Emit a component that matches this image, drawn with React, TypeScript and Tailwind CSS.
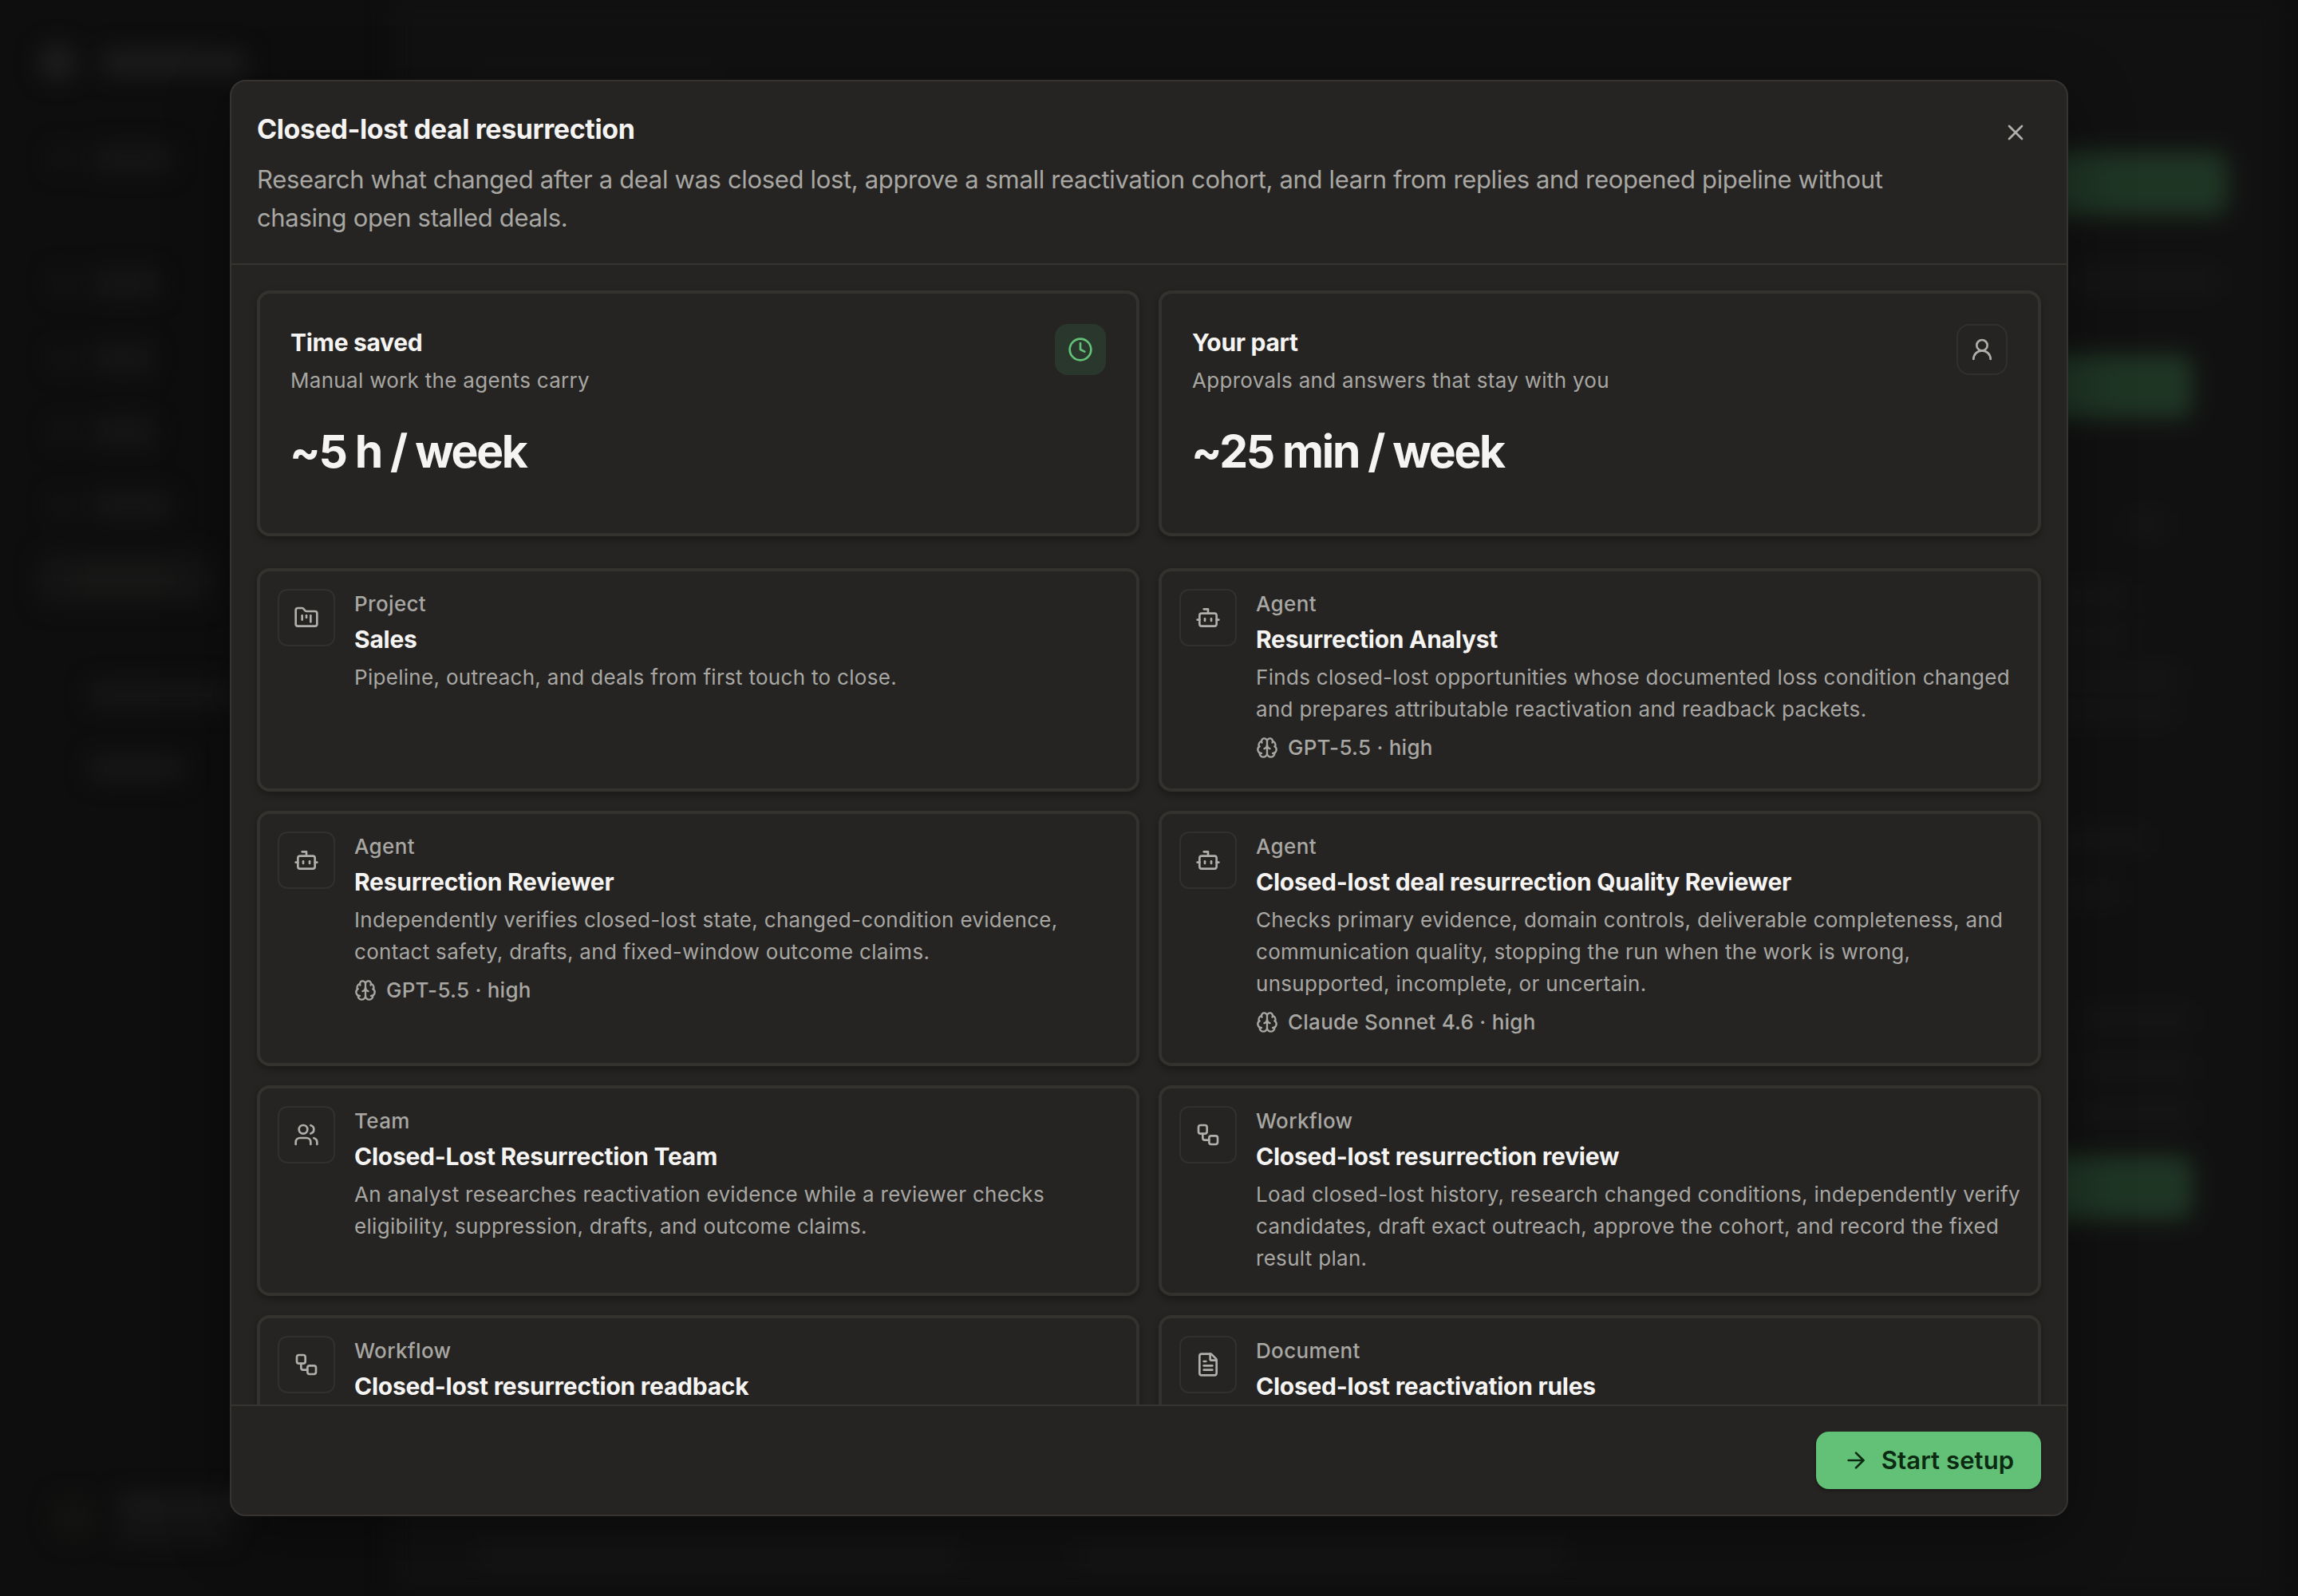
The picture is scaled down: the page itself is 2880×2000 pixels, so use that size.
import React from "react";
import {
  ArrowRight,
  Bot,
  Brain,
  Clock,
  FileText,
  FolderKanban,
  UserRound,
  Users,
  Workflow,
  X,
  type LucideIcon,
} from "lucide-react";

type Item = {
  icon: LucideIcon;
  kind: string;
  title: string;
  lines: string[];
  model?: string;
};

const items: Item[] = [
  {
    icon: FolderKanban,
    kind: "Project",
    title: "Sales",
    lines: ["Pipeline, outreach, and deals from first touch to close."],
  },
  {
    icon: Bot,
    kind: "Agent",
    title: "Resurrection Analyst",
    lines: [
      "Finds closed-lost opportunities whose documented loss condition changed",
      "and prepares attributable reactivation and readback packets.",
    ],
    model: "GPT-5.5 · high",
  },
  {
    icon: Bot,
    kind: "Agent",
    title: "Resurrection Reviewer",
    lines: [
      "Independently verifies closed-lost state, changed-condition evidence,",
      "contact safety, drafts, and fixed-window outcome claims.",
    ],
    model: "GPT-5.5 · high",
  },
  {
    icon: Bot,
    kind: "Agent",
    title: "Closed-lost deal resurrection Quality Reviewer",
    lines: [
      "Checks primary evidence, domain controls, deliverable completeness, and",
      "communication quality, stopping the run when the work is wrong,",
      "unsupported, incomplete, or uncertain.",
    ],
    model: "Claude Sonnet 4.6 · high",
  },
  {
    icon: Users,
    kind: "Team",
    title: "Closed-Lost Resurrection Team",
    lines: [
      "An analyst researches reactivation evidence while a reviewer checks",
      "eligibility, suppression, drafts, and outcome claims.",
    ],
  },
  {
    icon: Workflow,
    kind: "Workflow",
    title: "Closed-lost resurrection review",
    lines: [
      "Load closed-lost history, research changed conditions, independently verify",
      "candidates, draft exact outreach, approve the cohort, and record the fixed",
      "result plan.",
    ],
  },
  {
    icon: Workflow,
    kind: "Workflow",
    title: "Closed-lost resurrection readback",
    lines: [],
  },
  {
    icon: FileText,
    kind: "Document",
    title: "Closed-lost reactivation rules",
    lines: [],
  },
];

// Sidebar rows and the side column, seen only as blurred shapes
const navRows = [
  { gap: "mt-[80px]", width: "w-[100px]" },
  { gap: "mt-[122px]", width: "w-[83px]" },
  { gap: "mt-[60px]", width: "w-[75px]" },
  { gap: "mt-[58px]", width: "w-[77px]" },
  { gap: "mt-[58px]", width: "w-[100px]" },
];

const sideRows = [
  "mt-[118px] w-[50px] mr-[145px]",
  "mt-[60px] w-[140px] mr-[190px]",
  "mt-[20px] w-[140px] mr-[190px]",
  "mt-[22px] w-[200px] mr-[128px]",
  "mt-[14px] w-[190px] mr-[135px]",
  "mt-[130px] w-[160px] mr-[170px]",
  "mt-[36px] w-[120px] mr-[200px]",
  "mt-[128px] w-[140px] mr-[114px]",
  "mt-[30px] w-[140px] mr-[114px]",
  "mt-[28px] w-[140px] mr-[114px]",
];

const StatCard = ({
  title,
  subtitle,
  value,
  children,
}: {
  title: string;
  subtitle: string;
  value: string;
  children: React.ReactNode;
}) => (
  <div className="flex h-[308px] justify-between rounded-2xl border-4 border-[#33322f] p-[38px] shadow-[0_4px_10px_rgba(0,0,0,0.3)]">
    <div className="-mt-px whitespace-nowrap">
      <div className="text-[30px] leading-[48px] font-bold tracking-[-0.3px] text-[#f5f4f2]">
        {title}
      </div>
      <div className="text-[26px] leading-12 tracking-[0.3px] text-[#a8a7a3]">
        {subtitle}
      </div>
      <div className="mt-[25px] -ml-px text-[57px] leading-[80px] font-bold tracking-[-2.3px] text-[#f5f4f2]">
        {value}
      </div>
    </div>
    {children}
  </div>
);

const ItemCard = ({ item }: { item: Item }) => {
  const Icon = item.icon;
  return (
    <div className="flex gap-6 rounded-2xl border-4 border-[#33322f] bg-[#252422] p-[22px] shadow-[0_4px_10px_rgba(0,0,0,0.3)]">
      <div className="flex size-[72px] shrink-0 items-center justify-center rounded-xl border-2 border-[#31302e] text-[#b0afab]">
        <Icon size={32} />
      </div>
      <div className="-mt-px min-w-0 whitespace-nowrap">
        <div className="text-[26px] leading-10 font-medium tracking-[0.35px] text-[#a8a7a3]">
          {item.kind}
        </div>
        <div className="text-[30px] leading-[48px] font-bold tracking-[-0.26px] text-[#f5f4f2]">
          {item.title}
        </div>
        <div className="mt-1 text-[26px] leading-10 tracking-[0.3px] text-[#a8a7a3]">
          {item.lines.map((line) => (
            <div key={line}>{line}</div>
          ))}
        </div>
        {item.model && (
          <div className="mt-2 flex items-center gap-3 text-[26px] leading-10 font-medium tracking-[0.25px] text-[#a8a7a3]">
            <Brain size={28} />
            {item.model}
          </div>
        )}
      </div>
    </div>
  );
};

const Backdrop = () => (
  <div className="flex h-full blur-[14px]">
    <div className="flex w-[490px] shrink-0 flex-col items-start pt-[54px] pl-[48px]">
      <div className="flex items-center gap-8">
        <div className="size-12 rounded-full bg-[#1d1d1d]" />
        <div className="h-8 w-[180px] bg-[#1c1c1c]" />
      </div>
      <div className="pl-4">
        {navRows.map((row) => (
          <div key={row.gap + row.width} className={`flex items-center gap-6 ${row.gap}`}>
            <div className="size-7 bg-[#131313]" />
            <div className={`h-[34px] bg-[#161616] ${row.width}`} />
          </div>
        ))}
      </div>
      <div className="mt-[44px] flex h-16 w-[220px] items-center justify-center rounded-xl bg-[#131413]">
        <div className="h-7 w-[130px] bg-[#181817]" />
      </div>
      <div className="mt-[96px] ml-[64px] h-8 w-[180px] bg-[#161616]" />
      <div className="mt-[60px] ml-[64px] h-8 w-[120px] bg-[#171717]" />
      <div className="mt-[894px] flex items-center gap-7 pl-4">
        <div className="size-14 rounded-full bg-[#131311]" />
        <div className="flex flex-col gap-2">
          <div className="h-7 w-[160px] bg-[#191919]" />
          <div className="h-6 w-[140px] bg-[#151515]" />
        </div>
      </div>
    </div>
    <div className="flex flex-1 flex-col bg-[#111111] pl-[110px]">
      <div className="mt-[82px] h-7 w-[300px] bg-[#131313]" />
      <div className="mt-[1822px] flex gap-[150px]">
        <div className="h-8 w-[600px] bg-[#151515]" />
        <div className="h-8 w-[610px] bg-[#151515]" />
      </div>
    </div>
    <div className="flex w-[400px] flex-col items-end bg-[#111111]">
      <div className="mt-[190px] mr-[68px] h-20 w-[332px] rounded-2xl bg-[#1f3524]" />
      <div className="mt-[64px] mr-[80px] h-9 w-[180px] bg-[#151515]" />
      <div className="mt-[74px] mr-[112px] h-20 w-[288px] rounded-2xl bg-[#1f3524]" />
      {sideRows.map((row) => (
        <div key={row} className={`h-[30px] shrink-0 bg-[#151515] ${row}`} />
      ))}
      <div className="mt-[38px] mr-[112px] h-20 w-[288px] shrink-0 rounded-2xl bg-[#1f3524]" />
    </div>
    <div className="w-5 shrink-0" />
  </div>
);

const App = () => {
  return (
    <div className="relative h-[2000px] w-[2880px] overflow-hidden bg-[#0e0e0e] font-['Inter',sans-serif]">
      {/* Page behind the dialog */}
      <Backdrop />

      {/* Dialog */}
      <div className="absolute inset-x-[288px] inset-y-[100px] flex flex-col overflow-hidden rounded-[20px] border-2 border-[#353431] bg-[#252422] shadow-[0_20px_80px_rgba(0,0,0,0.35)]">
        {/* Header */}
        <div className="flex h-[230px] shrink-0 justify-between border-b-2 border-[#353431] px-8 pt-8">
          <div className="whitespace-nowrap">
            <h1 className="text-[34px] leading-[56px] font-bold tracking-[-0.4px] text-[#f5f4f2]">
              Closed-lost deal resurrection
            </h1>
            <p className="mt-[11px] text-[31px] leading-12 tracking-[-0.34px] text-[#a8a7a3]">
              Research what changed after a deal was closed lost, approve a
              small reactivation cohort, and learn from replies and reopened
              pipeline without
              <br />
              chasing open stalled deals.
            </p>
          </div>
          <button className="mt-4 mr-4 flex size-8 items-center justify-center self-start text-[#b0afab]">
            <X size={32} />
          </button>
        </div>

        {/* Scrolling body */}
        <div className="min-h-0 flex-1 overflow-hidden p-8">
          <div className="grid grid-cols-2 gap-6">
            <StatCard
              title="Time saved"
              subtitle="Manual work the agents carry"
              value="~5 h / week"
            >
              <div className="flex size-16 items-center justify-center rounded-2xl bg-[#2a372c] text-[#63c178]">
                <Clock size={32} />
              </div>
            </StatCard>
            <StatCard
              title="Your part"
              subtitle="Approvals and answers that stay with you"
              value="~25 min / week"
            >
              <div className="flex size-16 items-center justify-center rounded-2xl border-2 border-[#31302e] text-[#b0afab]">
                <UserRound size={32} />
              </div>
            </StatCard>
          </div>

          <div className="mt-10 grid grid-cols-2 grid-rows-[280px_320px_264px_264px] gap-6">
            {items.map((item) => (
              <ItemCard key={item.title} item={item} />
            ))}
          </div>
        </div>

        {/* Footer */}
        <div className="flex h-[138px] shrink-0 items-center justify-end border-t-2 border-[#353431] px-8">
          <button className="flex h-[72px] w-[282px] items-center justify-center gap-4 rounded-2xl bg-[#62c077] text-[31px] font-semibold tracking-[0.1px] whitespace-nowrap text-[#0c2a12] shadow-[0_2px_4px_rgba(0,0,0,0.4)]">
            <ArrowRight size={32} />
            Start setup
          </button>
        </div>
      </div>
    </div>
  );
};

export default App;
